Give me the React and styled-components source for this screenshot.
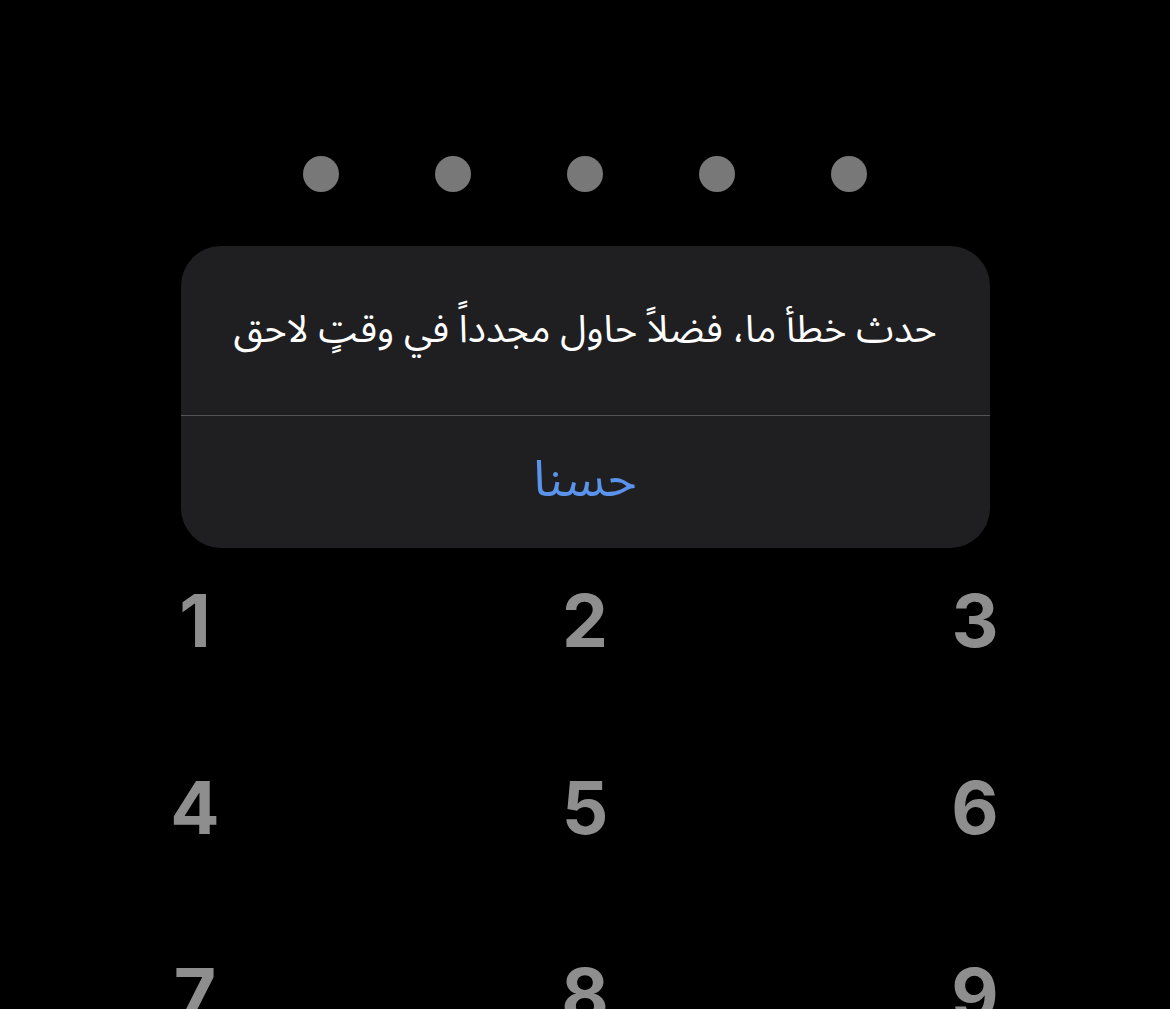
import React from "react";
import styled, { createGlobalStyle } from "styled-components";

const Global = createGlobalStyle`
  html, body { margin: 0; padding: 0; background: #000; }
  body { font-family: "Inter", "Liberation Sans", sans-serif; overflow: hidden; }
`;

const Screen = styled.div`
  width: 1170px;
  height: 1009px;
  background: #000;
  overflow: hidden;
  display: flex;
  flex-direction: column;
  align-items: center;
  & > * { flex-shrink: 0; }
`;

const Dots = styled.div`
  display: flex;
  gap: 96px;
  margin-top: 156px;
`;

const Dot = styled.span`
  width: 36px;
  height: 36px;
  border-radius: 50%;
  background: #787878;
`;

const Alert = styled.div`
  margin-top: 54px;
  width: 809px;
  border-radius: 40px;
  background: #1f1f21;
  display: flex;
  flex-direction: column;
  overflow: hidden;
  direction: rtl;
`;

const Message = styled.div`
  height: 167px;
  display: flex;
  align-items: center;
  justify-content: center;
  color: #fff;
  font-family: "Noto Sans Arabic", "DejaVu Sans", sans-serif;
  font-size: 38px;
  padding-bottom: 2px;
  border-bottom: 1px solid #545456;
`;

const Action = styled.button`
  height: 132px;
  border: 0;
  background: transparent;
  color: #5a93ec;
  font-family: "Noto Sans Arabic", "DejaVu Sans", sans-serif;
  font-size: 50px;
  padding: 0 0 4px;
`;

const Keypad = styled.div`
  width: 1170px;
  display: grid;
  grid-template-columns: repeat(3, 1fr);
  grid-auto-rows: 100px;
  row-gap: 87px;
  margin-top: 22px;
`;

const Key = styled.div`
  display: flex;
  align-items: center;
  justify-content: center;
  color: #8e8e8e;
  font-family: "Inter", "Liberation Sans", sans-serif;
  font-weight: 700;
  font-size: 73px;
  line-height: 1;
`;

export default function App() {
  return (
    <>
      <Global />
      <Screen>
        <Dots>
          {[0, 1, 2, 3, 4].map((i) => (
            <Dot key={i} />
          ))}
        </Dots>
        <Alert>
          <Message>حدث خطأ ما، فضلاً حاول مجدداً في وقتٍ لاحق</Message>
          <Action>حسنا</Action>
        </Alert>
        <Keypad>
          {["1", "2", "3", "4", "5", "6", "7", "8", "9"].map((d) => (
            <Key key={d}>{d}</Key>
          ))}
        </Keypad>
      </Screen>
    </>
  );
}
